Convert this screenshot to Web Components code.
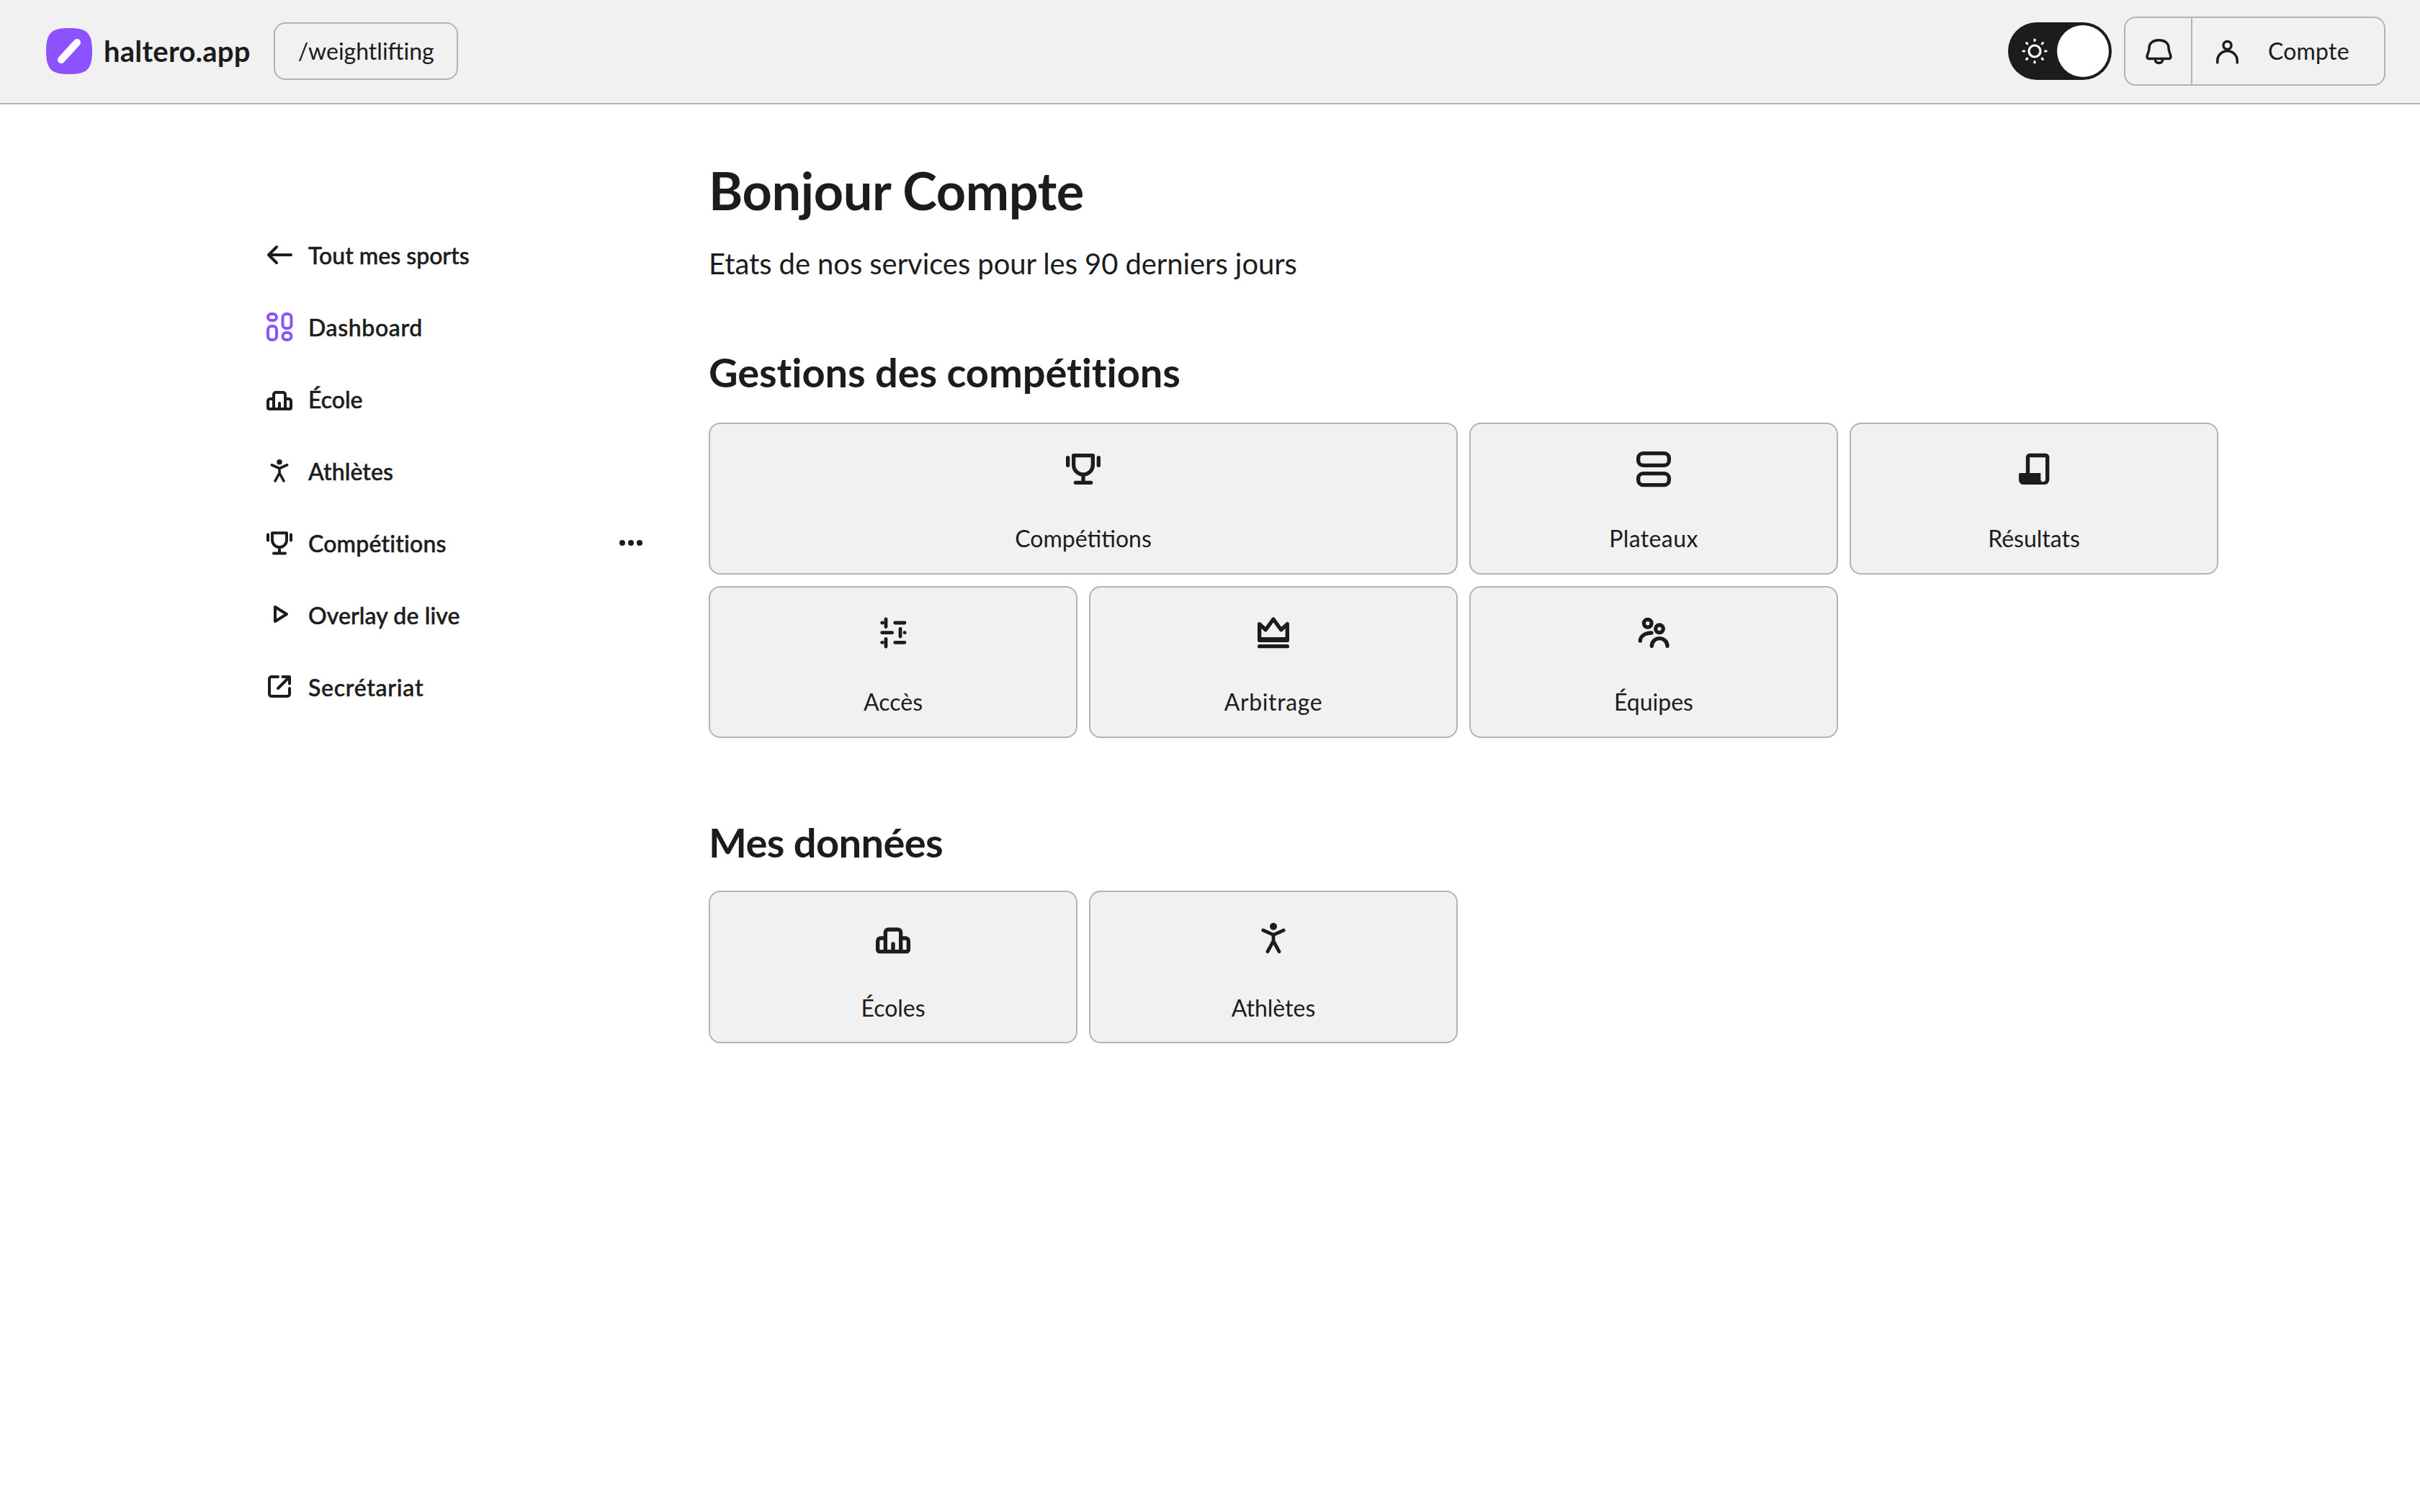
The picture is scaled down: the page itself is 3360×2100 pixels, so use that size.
<!doctype html>
<html lang="fr">
<head>
<meta charset="utf-8">
<title>haltero.app</title>
<style>
  html, body { margin: 0; background: #fff; }
  body { font-family: "Lato", "Liberation Sans", sans-serif; color: #1c1c1c; }
</style>
</head>
<body>
<home-page></home-page>
<script>
const ICONS = {
  back: `<path d="M40 24H10M20 13 9 24l11 11"/>`,
  dashboard: `<g stroke="#8c52ff"><rect x="8" y="6" width="12" height="9" rx="4.500"/><rect x="8" y="23" width="12" height="19" rx="5"/><rect x="28.500" y="6" width="12" height="20" rx="5"/><rect x="28.500" y="32" width="12" height="10" rx="5"/></g>`,
  podium: `<path d="M8 27a3 3 0 0 1 3-3h5v-6a3 3 0 0 1 3-3h10a3 3 0 0 1 3 3v6h5a3 3 0 0 1 3 3v9a2 2 0 0 1-2 2H10a2 2 0 0 1-2-2zM16 24v14M32 24v14M24 30v8"/>`,
  athlete: `<circle cx="24" cy="11.800" r="3.750" fill="currentColor" stroke="none"/><path stroke-width="3.600" d="M13.300 15.750 24 20.500l10.700-4.750M24 20.500V27M24 27l-6 11M24 27l6 11"/>`,
  trophy: `<path d="M14 10.250h20v9.750a10 10 0 0 1-20 0zM24 31v7M16 38.500h16M8 12.500v8M40 12.500v8"/>`,
  play: `<path d="M18 13v20l16-10z"/>`,
  external: `<path d="M22 10h-9a3 3 0 0 0-3 3v21a3 3 0 0 0 3 3h22a3 3 0 0 0 3-3v-8M28.500 10H38v9.500M37.500 10.500 22 26"/>`,
  plateaux: `<rect x="8" y="8" width="32" height="12.500" rx="5"/><rect x="8" y="29" width="32" height="12" rx="5"/>`,
  results: `<path d="M17.600 28.500V12a1.900 1.900 0 0 1 1.900-1.900h16.600a1.900 1.900 0 0 1 1.900 1.900v23"/><path stroke="none" fill="currentColor" d="M9.500 28.500H31V35c0 1.700.9 2.600 2.400 2.600s2.600-.9 2.600-2.600v-1h3.750v2a4.500 4.500 0 0 1-4.500 4.500H13a4.750 4.750 0 0 1-4.750-4.750V29.750a1.250 1.250 0 0 1 1.250-1.250z"/>`,
  sliders: `<path stroke-width="3.600" d="M16.500 10.500v8M12.500 14.250h.5M26 14.250h10M31.500 20.500v8M12.500 24.500H23M36 24.500h.2M16.500 31v8M12.500 34.750h.5M26 34.750h10"/>`,
  crown: `<path d="M9.500 15.500 16 21.500l8-11 8 11 6.500-6v17h-29zM9.500 38.750h29"/><path stroke-width="2.500" d="M10 30.500h28"/>`,
  team: `<circle cx="17.800" cy="14.800" r="4"/><circle cx="30" cy="20.500" r="4"/><path d="M10 33c0-4.700 5-8.250 11.750-8.250M22 38.500a8.100 8 0 0 1 16.250 0"/>`,
  bell: `<g stroke-width="3.500"><path d="M8 32c0-4 3-6.500 3-12.500C11 13 16.500 8.750 24.500 8.750S38 13 38 19.500c0 6 3 8.500 3 12.500a2.500 2.500 0 0 1-2.500 2.500h-28A2.500 2.500 0 0 1 8 32z"/><path d="M19.500 36.500a5 4 0 0 0 10 0"/></g>`,
  person: `<g stroke-width="3.500"><circle cx="24.500" cy="16" r="5.500"/><path d="M10.750 40v-2.500a13.750 13.750 0 0 1 27.500 0V40"/></g>`
};

class AppIcon extends HTMLElement {
  constructor() {
    super();
    this.attachShadow({ mode: "open" });
  }

  connectedCallback() {
    const size = this.getAttribute("size") ?? "48";
    this.shadowRoot.innerHTML = `
      <style>
        :host { display: block; flex: none; width: ${size}px; height: ${size}px; color: #1c1c1c; }
        svg { display: block; width: 100%; height: 100%; fill: none; stroke: currentColor; stroke-width: 4; stroke-linecap: round; stroke-linejoin: round; }
      </style>
      <svg viewBox="0 0 48 48">${ICONS[this.getAttribute("name")] ?? ""}</svg>
    `;
  }
}
customElements.define("app-icon", AppIcon);

class ThemeToggle extends HTMLElement {
  constructor() {
    super();
    this.attachShadow({ mode: "open" });
    this.shadowRoot.innerHTML = `
      <style>
        :host { display: flex; align-items: center; justify-content: space-between; box-sizing: border-box; width: 144px; height: 80px; padding: 4px; border-radius: 40px; background: #1c1c1c; }
        svg { display: block; width: 48px; height: 48px; margin-left: 9px; fill: none; stroke: #fff; stroke-width: 3.2; stroke-linecap: round; }
        .thumb { width: 72px; height: 72px; border-radius: 50%; background: #fff; }
      </style>
      <svg viewBox="0 0 48 48">
        <circle cx="24" cy="24" r="8"/>
        <path d="M24 8v1.500M24 38.500V40M8 24h1.500M38.500 24H40M12.700 12.700l1 1M34.300 34.300l1 1M12.700 35.300l1-1M34.300 13.700l1-1"/>
      </svg>
      <div class="thumb"></div>
    `;
  }
}
customElements.define("theme-toggle", ThemeToggle);

class AccountMenu extends HTMLElement {
  constructor() {
    super();
    this.attachShadow({ mode: "open" });
    this.shadowRoot.innerHTML = `
      <style>
        :host { display: flex; box-sizing: border-box; width: 363px; height: 96px; border: 2px solid #b3b3b3; border-radius: 16px; }
        .bell { display: flex; align-items: center; justify-content: center; box-sizing: border-box; width: 93px; border-right: 2px solid #b3b3b3; }
        .account { display: flex; align-items: center; flex: 1; padding-left: 24px; font-size: 32px; }
        .account span { margin-left: 33px; letter-spacing: .2px; }
      </style>
      <div class="bell"><app-icon name="bell"></app-icon></div>
      <div class="account"><app-icon name="person"></app-icon><span>Compte</span></div>
    `;
  }
}
customElements.define("account-menu", AccountMenu);

class AppHeader extends HTMLElement {
  constructor() {
    super();
    this.attachShadow({ mode: "open" });
    this.shadowRoot.innerHTML = `
      <style>
        :host { display: flex; align-items: center; box-sizing: border-box; height: 145px; padding: 0 48px 2px 64px; background: #f1f1f1; border-bottom: 2px solid #b3b3b3; }
        .logo { display: block; width: 64px; height: 64px; flex: none; }
        .name { margin-left: 16px; font-size: 40px; font-weight: 700; letter-spacing: .2px; white-space: nowrap; }
        .sport { display: flex; align-items: center; box-sizing: border-box; height: 80px; width: 256px; margin-left: 32px; padding-left: 32px; border: 2px solid #b3b3b3; border-radius: 16px; font-size: 32px; white-space: nowrap; }
        .end { display: flex; align-items: center; gap: 17px; margin-left: auto; }
      </style>
      <svg class="logo" viewBox="0 0 64 64">
        <path fill="#8c52ff" d="M32 0C56 0 64 6 64 32S56 64 32 64 0 58 0 32 8 0 32 0z"/>
        <path d="M21 44 43 20" stroke="#fff" stroke-width="10" stroke-linecap="round"/>
      </svg>
      <span class="name">haltero.app</span>
      <div class="sport">/weightlifting</div>
      <div class="end">
        <theme-toggle></theme-toggle>
        <account-menu></account-menu>
      </div>
    `;
  }
}
customElements.define("app-header", AppHeader);

class NavItem extends HTMLElement {
  constructor() {
    super();
    this.attachShadow({ mode: "open" });
  }

  connectedCallback() {
    this.shadowRoot.innerHTML = `
      <style>
        :host { display: flex; align-items: center; gap: 16px; height: 48px; font-size: 32px; font-weight: 500; -webkit-text-stroke: .5px #1c1c1c; white-space: nowrap; }
        .more { display: flex; gap: 4px; margin-left: auto; }
        .more i { width: 8px; height: 8px; border-radius: 50%; background: #1c1c1c; }
      </style>
      <app-icon name="${this.getAttribute("icon")}"></app-icon>
      <slot></slot>
      ${this.hasAttribute("more") ? `<div class="more"><i></i><i></i><i></i></div>` : ""}
    `;
  }
}
customElements.define("nav-item", NavItem);

class SideNav extends HTMLElement {
  constructor() {
    super();
    this.attachShadow({ mode: "open" });
    this.shadowRoot.innerHTML = `
      <style>
        :host { display: flex; flex-direction: column; gap: 52px; padding-top: 185px; }
      </style>
      <nav-item icon="back">Tout mes sports</nav-item>
      <nav-item icon="dashboard" style="letter-spacing: .65px">Dashboard</nav-item>
      <nav-item icon="podium">École</nav-item>
      <nav-item icon="athlete" style="letter-spacing: .1px">Athlètes</nav-item>
      <nav-item icon="trophy" style="letter-spacing: .2px" more>Compétitions</nav-item>
      <nav-item icon="play" style="letter-spacing: .1px">Overlay de live</nav-item>
      <nav-item icon="external" style="letter-spacing: .75px">Secrétariat</nav-item>
    `;
  }
}
customElements.define("side-nav", SideNav);

class DashCard extends HTMLElement {
  constructor() {
    super();
    this.attachShadow({ mode: "open" });
  }

  connectedCallback() {
    this.shadowRoot.innerHTML = `
      <style>
        :host { display: flex; flex-direction: column; align-items: center; box-sizing: border-box; height: var(--card-height, 211px); padding-top: var(--card-pad, 30px); border: 2px solid #b3b3b3; border-radius: 16px; background: #f1f1f1; font-size: 32px; }
        .label { margin-top: 45px; line-height: 40px; }
      </style>
      <app-icon name="${this.getAttribute("icon")}" size="64"></app-icon>
      <div class="label"><slot></slot></div>
    `;
  }
}
customElements.define("dash-card", DashCard);

class DashSection extends HTMLElement {
  constructor() {
    super();
    this.attachShadow({ mode: "open" });
  }

  connectedCallback() {
    this.shadowRoot.innerHTML = `
      <style>
        :host { display: block; }
        h2 { margin: 0 0 var(--title-gap, 38px); font-size: 56px; line-height: 64px; font-weight: 700; letter-spacing: var(--title-ls, -.1px); }
        .grid { display: grid; grid-template-columns: repeat(4, 1fr); gap: 16px; }
      </style>
      <h2>${this.getAttribute("title")}</h2>
      <div class="grid"><slot></slot></div>
    `;
  }
}
customElements.define("dash-section", DashSection);

class HomePage extends HTMLElement {
  constructor() {
    super();
    this.attachShadow({ mode: "open" });
    this.shadowRoot.innerHTML = `
      <style>
        :host { display: block; min-height: 2100px; background: #fff; }
        .layout { display: grid; grid-template-columns: 528px 2096px; column-gap: 92px; padding-left: 364px; }
        main { padding-top: 79px; }
        h1 { margin: 0 0 34px; font-size: 72px; line-height: 80px; font-weight: 700; letter-spacing: -.35px; }
        .lead { margin: 0 0 91px; font-size: 40px; line-height: 56px; letter-spacing: -.08px; }
        .data { margin-top: 113px; --title-gap: 35px; --title-ls: -.6px; --card-pad: 32px; --card-height: 212px; }
      </style>
      <app-header></app-header>
      <div class="layout">
        <side-nav></side-nav>
        <main>
          <h1>Bonjour Compte</h1>
          <p class="lead">Etats de nos services pour les 90 derniers jours</p>
          <dash-section title="Gestions des compétitions">
            <dash-card style="grid-column: span 2" icon="trophy">Compétitions</dash-card>
            <dash-card icon="plateaux" style="letter-spacing: .4px">Plateaux</dash-card>
            <dash-card icon="results">Résultats</dash-card>
            <dash-card icon="sliders">Accès</dash-card>
            <dash-card icon="crown" style="letter-spacing: .6px">Arbitrage</dash-card>
            <dash-card icon="team">Équipes</dash-card>
          </dash-section>
          <dash-section class="data" title="Mes données">
            <dash-card icon="podium">Écoles</dash-card>
            <dash-card icon="athlete">Athlètes</dash-card>
          </dash-section>
        </main>
      </div>
    `;
  }
}
customElements.define("home-page", HomePage);
</script>
</body>
</html>
